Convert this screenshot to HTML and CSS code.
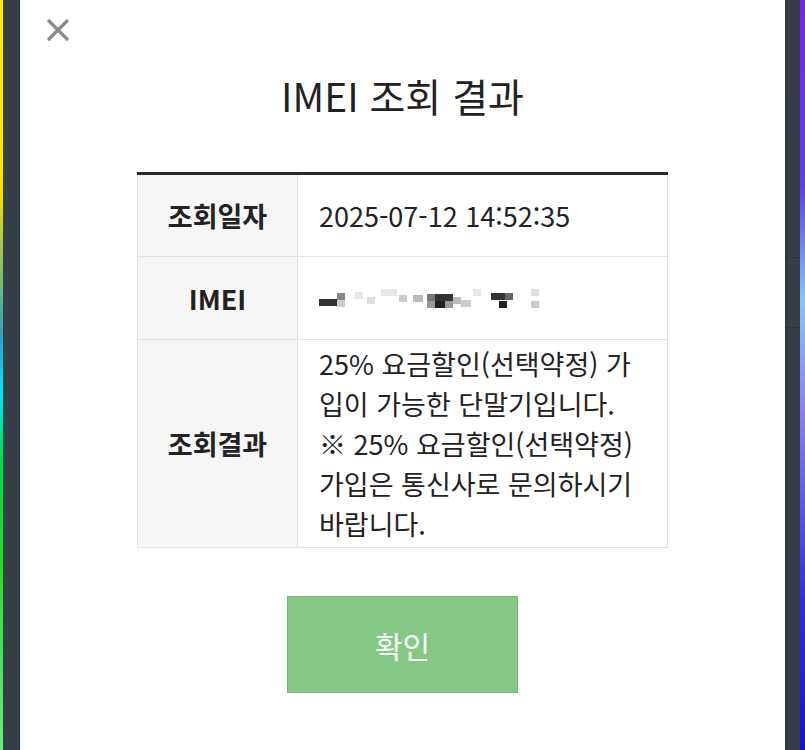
FILE: index.html
```html
<!DOCTYPE html>
<html lang="ko">
<head>
<meta charset="utf-8">
<link rel="stylesheet" href="styles.css">
</head>
<body>
<div class="page">
  <div class="rainbow-left"></div>
  <div class="side side-left"></div>
  <div class="modal">
    <button class="close" aria-label="닫기">
      <svg width="24" height="24" viewBox="0 0 24 24"><path d="M2 2 L22 22 M22 2 L2 22" stroke="#8a8a8a" stroke-width="3.2" stroke-linecap="butt" fill="none"/></svg>
    </button>
    <h1 class="title">IMEI 조회 결과</h1>
    <table class="result">
      <tr class="r1">
        <th>조회일자</th>
        <td>2025-07-12 14:52:35</td>
      </tr>
      <tr class="r2">
        <th>IMEI</th>
        <td><div class="blur">
          <span class="px" style="left:0;top:12px;width:18px;background:#333"></span>
          <span class="px" style="left:18px;top:6px;width:8px;background:#888"></span>
          <span class="px" style="left:18px;top:13px;width:8px;background:#ccc"></span>
          <span class="px" style="left:36px;top:5px;width:8px;background:#e6e6e6"></span>
          <span class="px" style="left:48px;top:10px;width:8px;background:#ddd"></span>
          <span class="px" style="left:62px;top:2px;width:16px;background:#e8e8e8"></span>
          <span class="px" style="left:80px;top:8px;width:8px;background:#ccc"></span>
          <span class="px" style="left:94px;top:8px;width:10px;background:#bbb"></span>
          <span class="px" style="left:108px;top:7px;width:8px;background:#777"></span>
          <span class="px" style="left:116px;top:7px;width:18px;background:#333"></span>
          <span class="px" style="left:108px;top:14px;width:8px;background:#999"></span>
          <span class="px" style="left:116px;top:14px;width:10px;background:#222"></span>
          <span class="px" style="left:126px;top:14px;width:8px;background:#999"></span>
          <span class="px" style="left:134px;top:10px;width:8px;background:#bbb"></span>
          <span class="px" style="left:142px;top:13px;width:10px;background:#ccc"></span>
          <span class="px" style="left:154px;top:2px;width:8px;background:#e6e6e6"></span>
          <span class="px" style="left:172px;top:6px;width:14px;background:#333"></span>
          <span class="px" style="left:186px;top:6px;width:8px;background:#666"></span>
          <span class="px" style="left:180px;top:14px;width:8px;background:#222"></span>
          <span class="px" style="left:212px;top:2px;width:8px;background:#e0e0e0"></span>
          <span class="px" style="left:212px;top:14px;width:8px;background:#ccc"></span>
        </div></td>
      </tr>
      <tr class="r3">
        <th>조회결과</th>
        <td class="msg">25% 요금할인(선택약정) 가입이 가능한 단말기입니다.<br>※ 25% 요금할인(선택약정) 가입은 통신사로 문의하시기 바랍니다.</td>
      </tr>
    </table>
    <div class="actions">
      <button class="confirm">확인</button>
    </div>
  </div>
  <div class="side side-right"></div>
  <div class="rainbow-right"></div>
</div>
</body>
</html>
```

FILE: styles.css
```css
* { box-sizing: border-box; }
html, body { margin: 0; padding: 0; }
body {
  font-family: "Noto Sans CJK KR", "Noto Sans", sans-serif;
  color: #222;
  background: #fff;
}
.page {
  display: flex;
  width: 805px;
  height: 750px;
  overflow: hidden;
}
.rainbow-left {
  width: 3px;
  background: linear-gradient(to bottom, #ffee00 0%, #f7e400 25%, #2aa0c0 45%, #00e5ff 52%, #00dd44 62%, #22dd22 75%, #66ee88 100%);
}
.side {
  background: #363e48;
}
.side-left { width: 17px; border-right: 1px solid #2a3038; }
.side-right {
  width: 15px;
  border-left: 1px solid #2a3038;
  background:
    linear-gradient(#2c333c, #2c333c) 0 257px / 100% 1px no-repeat,
    linear-gradient(#2c333c, #2c333c) 0 327px / 100% 1px no-repeat,
    #363e48;
}
.rainbow-right {
  width: 5px;
  background: linear-gradient(to bottom, #7a1fff 0%, #5a3cff 25%, #80c8ff 40%, #8a7cff 55%, #2a2aff 80%, #1010ee 100%);
}
.modal {
  position: relative;
  flex: 1;
  background: #fff;
  display: flex;
  flex-direction: column;
  align-items: center;
  padding-top: 69px;
}
.close {
  position: absolute;
  left: 26px;
  top: 18px;
  width: 24px;
  height: 24px;
  padding: 0;
  border: 0;
  background: none;
}
.close svg { display: block; }
.title {
  margin: 0;
  font-size: 39px;
  font-weight: 400;
  line-height: 52px;
  color: #222;
}
.result {
  margin-top: 51px;
  width: 531px;
  border-collapse: collapse;
  border-top: 3px solid #2b2b2b;
  font-size: 27px;
}
.result th, .result td {
  border: 1px solid #e3e3e3;
  vertical-align: middle;
}
.result tr:first-child th, .result tr:first-child td { border-top: 0; }
.result th {
  width: 160px;
  background: #f6f6f6;
  font-weight: 700;
  color: #222;
  text-align: center;
}
.result td {
  padding: 0 18px 0 21px;
  color: #222;
  text-align: left;
  font-weight: 400;
}
.r1 th, .r1 td { height: 83px; }
.r2 th, .r2 td { height: 83px; }
.r3 th, .r3 td { height: 208px; }
.msg {
  line-height: 40px;
  font-size: 27px;
}
.blur {
  position: relative;
  height: 22px;
  width: 230px;
}
.px {
  position: absolute;
  height: 7px;
  display: block;
}
.actions {
  margin-top: 48px;
}
.confirm {
  width: 231px;
  height: 97px;
  border: 1px solid #79b879;
  background: #85c885;
  color: #fff;
  font-family: "Noto Sans CJK KR", sans-serif;
  font-size: 30px;
  font-weight: 400;
  padding: 0;
}
```
